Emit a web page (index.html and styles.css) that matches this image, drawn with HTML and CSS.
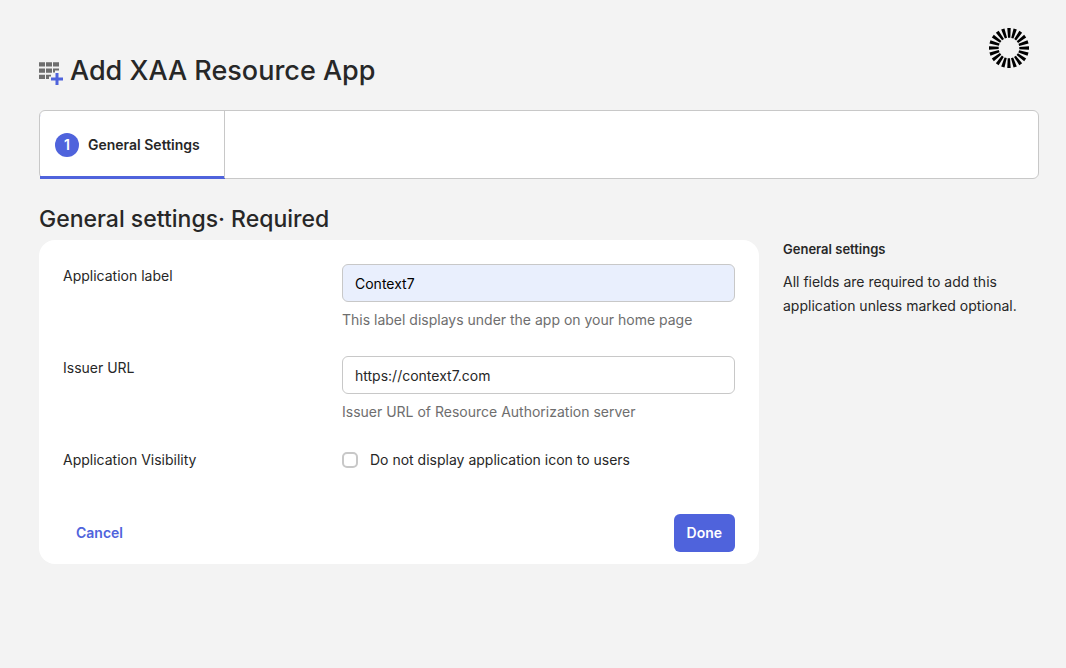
FILE: index.html
```html
<!DOCTYPE html>
<html lang="en">
<head>
    <meta charset="UTF-8">
    <meta name="viewport" content="width=device-width, initial-scale=1.0">
    <title>Add XAA Resource App</title>
    <link rel="stylesheet" href="styles.css">
</head>
<body>

<header class="page-header">
    <svg class="app-icon" viewBox="0 0 25 24" aria-hidden="true">
        <path fill="#6e6e6e" d="M0 1.2h6v4.2H0zM7 1.2h6v4.2H7zM14 1.2h6v4.2h-6zM0 7.6h6v4.200H0zM7 7.600h6v4.200H7zM14 7.600h6v2h-4v2h-2zM0 13.800h6v4.200H0zM7 13.800h5v1.600h-2V18H7z"/>
        <path fill="#4f63dc" d="M16.500 12h3v4.500H24v3h-4.500V24h-3v-4.500H12v-3h4.500z"/>
    </svg>
    <h1>Add XAA Resource App</h1>
    <svg class="logo" viewBox="-20 -20 40 40" role="img" aria-label="Okta">
        <defs>
            <path id="ray" d="M-1.7-20h3.4L1.300-10.300h-2.300z"/>
            <g id="rays">
                <use href="#ray"/>
                <use href="#ray" transform="rotate(18)"/>
                <use href="#ray" transform="rotate(36)"/>
                <use href="#ray" transform="rotate(54)"/>
                <use href="#ray" transform="rotate(72)"/>
            </g>
        </defs>
        <use href="#rays"/>
        <use href="#rays" transform="rotate(90)"/>
        <use href="#rays" transform="rotate(180)"/>
        <use href="#rays" transform="rotate(270)"/>
    </svg>
</header>

<ol class="steps">
    <li class="step active"><span class="step-number">1</span>General Settings</li>
</ol>

<main class="content">
    <h2>General settings· Required</h2>

    <form class="card">
        <div class="field">
            <label for="appLabel">Application label</label>
            <div>
                <input class="text-input autofilled" type="text" id="appLabel" value="Context7">
                <p class="hint">This label displays under the app on your home page</p>
            </div>
        </div>
        <div class="field">
            <label for="issuerUrl">Issuer URL</label>
            <div>
                <input class="text-input" type="text" id="issuerUrl" value="https://context7.com">
                <p class="hint">Issuer URL of Resource Authorization server</p>
            </div>
        </div>
        <div class="field">
            <span>Application Visibility</span>
            <label class="check"><input type="checkbox">Do not display application icon to users</label>
        </div>
        <div class="actions">
            <button class="button link" type="button">Cancel</button>
            <button class="button primary" type="submit">Done</button>
        </div>
    </form>

    <aside class="help">
        <h3>General settings</h3>
        <p>All fields are required to add this application unless marked optional.</p>
    </aside>
</main>

</body>
</html>
```
FILE: styles.css
```css
* {
    box-sizing: border-box;
}
body {
    margin: 0;
    padding: 28px 27px 28px 39px;
    background: #f3f3f3;
    color: #272727;
    font-family: Inter, sans-serif;
    font-size: 14px;
    line-height: 24px;
}
h1, h2, h3, p {
    margin: 0;
}
.page-header {
    display: flex;
    align-items: flex-start;
}
.page-header h1 {
    flex: 1;
    margin: 25px 0 21px 6px;
    font-size: 27px;
    font-weight: 500;
    line-height: 36px;
}
.app-icon {
    width: 25px;
    height: 24px;
    margin-top: 33px;
}
.logo {
    width: 40px;
    height: 40px;
    margin-right: 10px;
}
.steps {
    display: flex;
    margin: 0 0 24px;
    padding: 0;
    height: 69px;
    list-style: none;
    background: #fff;
    border: 1px solid #c8c8c8;
    border-radius: 6px;
}
.step {
    display: flex;
    align-items: center;
    gap: 9px;
    padding: 0 24px 0 15px;
    border-right: 1px solid #c8c8c8;
    font-weight: 600;
}
.step.active {
    box-shadow: inset 0 -2px #4f63dc, 0 1px #4f63dc;
    border-radius: 6px 0 0 0;
}
.step-number {
    width: 24px;
    border-radius: 50%;
    background: #4f63dc;
    color: #fff;
    text-align: center;
}
.content {
    display: grid;
    grid-template-columns: minmax(0, 1fr) 256px;
    column-gap: 24px;
    align-items: start;
}
.content h2 {
    grid-column: 1 / -1;
    padding-bottom: 5px;
    font-size: 23px;
    font-weight: 500;
    line-height: 32px;
}
.card {
    padding: 24px 24px 12px;
    background: #fff;
    border-radius: 16px;
}
.field {
    display: grid;
    grid-template-columns: 279px minmax(0, 1fr);
    margin-bottom: 24px;
}
.text-input {
    display: block;
    width: 100%;
    height: 38px;
    padding: 0 12px;
    border: 1px solid #c8c8c8;
    border-radius: 6px;
    background: #fff;
    color: #272727;
    font: inherit;
}
.text-input.autofilled {
    background: #e9effd;
    color: #000;
}
.hint {
    margin-top: 6px;
    color: #6e6e6e;
}
.check {
    display: flex;
    align-items: center;
    gap: 12px;
}
.check input {
    appearance: none;
    width: 16px;
    height: 16px;
    margin: 0;
    border: 2px solid #c8c8c8;
    border-radius: 5px;
    background: #fff;
}
.check input:checked {
    border-color: #4f63dc;
    background: #4f63dc;
}
.actions {
    display: flex;
    justify-content: space-between;
    margin-top: 42px;
}
.button {
    height: 38px;
    padding: 0 13px;
    border: none;
    border-radius: 6px;
    font: inherit;
    font-weight: 600;
    cursor: pointer;
}
.button.link {
    background: transparent;
    color: #4f63dc;
}
.button.primary {
    background: #4f63dc;
    color: #fff;
}
.help h3 {
    margin-bottom: 12px;
    font-size: 13px;
    font-weight: 600;
    line-height: 18px;
}
```
